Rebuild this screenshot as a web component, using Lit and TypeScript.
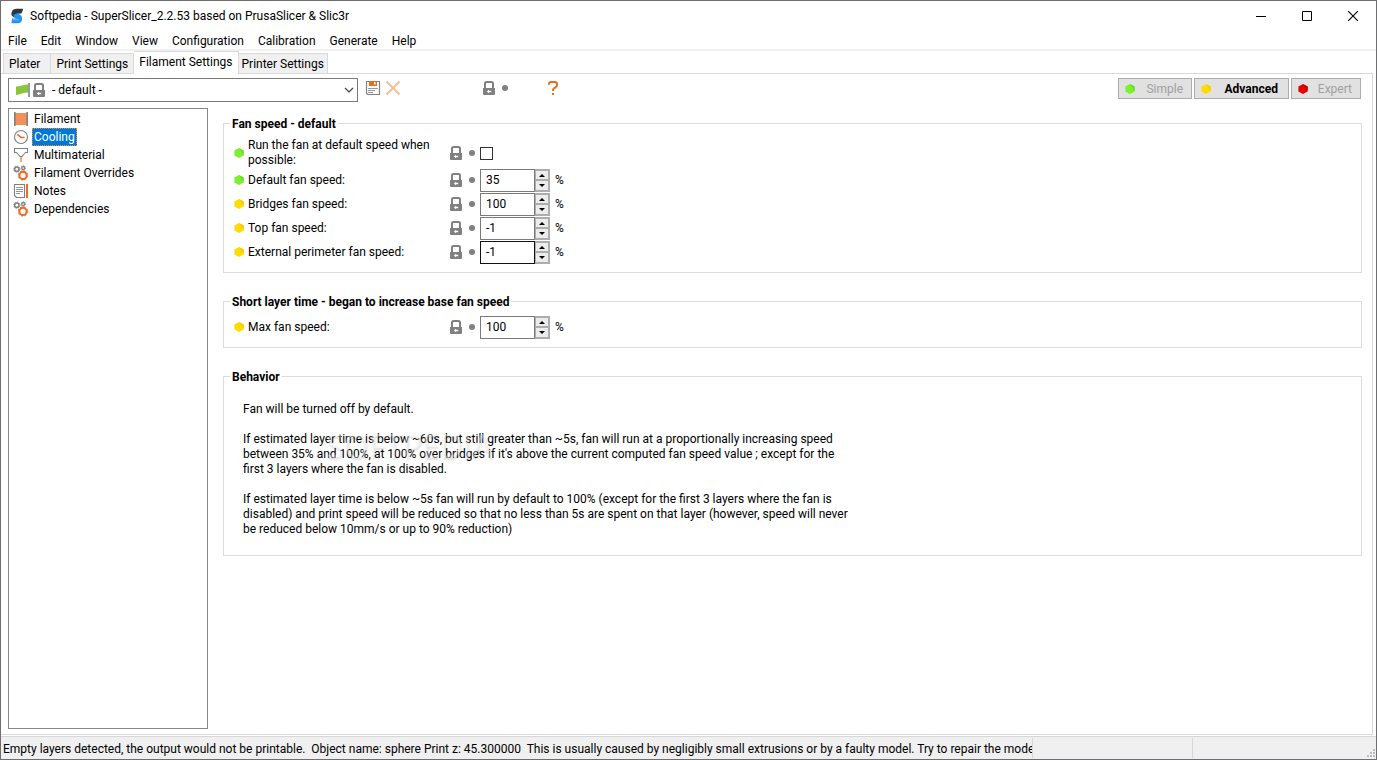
import { LitElement, html, css, svg, nothing } from "lit";
import { customElement, property } from "lit/decorators.js";

const GREY = "#808080";
const ORANGE = "#ed6b21";

const art: Record<string, { box: string; body: unknown }> = {
  lock: {
    box: "0 0 16 16",
    body: svg`<path d="M4 9V3.6Q4 2 5.6 2H10.4Q12 2 12 3.6V9" fill="none" stroke="${GREY}" stroke-width="2"/>
      <path d="M2 8H14V14Q14 15 13 15H3Q2 15 2 14Z" fill="${GREY}"/>
      <path d="M5.8 11.5 8 9.7V10.8H10.2V12.2H8V13.3Z" fill="#fff"/>`,
  },
  dot: { box: "0 0 16 16", body: svg`<circle cx="8" cy="8" r="3" fill="${GREY}"/>` },
  flag: {
    box: "0 0 16 16",
    body: svg`<path d="M1 4.6Q4 4.6 7 3.6T13 2.6V10.4Q10 10.4 7 11.6T1 13Z" fill="#8bc53f"/><path d="M14 1V15" stroke="${GREY}" stroke-width="1.6"/>`,
  },
  save: {
    box: "0 0 16 16",
    body: svg`<path d="M1.5 1.5H14.5V14.5H2.8L1.5 13.2Z" fill="#fff" stroke="${GREY}" stroke-width="1.2"/>
      <path d="M4 1H12V6H4Z" fill="${ORANGE}"/><path d="M9 2H10.6V4.4H9Z" fill="#fff"/>
      <path d="M3 8.5H13M3 10.5H10M3 12.5H8" stroke="#999"/>`,
  },
  cross: { box: "0 0 16 16", body: svg`<path d="M1.5 1.5 14.5 14.5M14.5 1.5 1.5 14.5" stroke="#f6bd9c" stroke-width="2"/>` },
  help: {
    box: "0 0 16 16",
    body: svg`<path d="M4 4.8V4Q4 2 6 2H10Q12 2 12 4V5Q12 6.6 10 7.6T8 10V11" fill="none" stroke="${ORANGE}" stroke-width="2"/><path d="M7 13H9V15H7Z" fill="${ORANGE}"/>`,
  },
  filament: {
    box: "0 0 16 16",
    body: svg`<path d="M2 2H14V14H2Z" fill="#f4905c"/><path d="M1.8 1V15M14.2 1V15" stroke="${GREY}" stroke-width="1.6"/>`,
  },
  clock: {
    box: "0 0 16 16",
    body: svg`<circle cx="8" cy="8" r="6.5" fill="#fff" stroke="${GREY}" stroke-width="1.1"/><path d="M4.4 5.4 8 8.4H11.6" fill="none" stroke="${ORANGE}" stroke-width="1.5"/>`,
  },
  nozzle: {
    box: "0 0 16 16",
    body: svg`<path d="M1.5 1.5H14.5V5.5H12.5L9 9.5H7L3.5 5.5H1.5Z" fill="#fff" stroke="${GREY}" stroke-width="1.1"/><path d="M8 10V15" stroke="#f4a67c" stroke-width="2"/>`,
  },
  gears: {
    box: "0 0 16 16",
    body: svg`<circle cx="3.8" cy="4.2" r="2.2" fill="none" stroke="${GREY}" stroke-width="1.5"/>
      <circle cx="3.8" cy="4.2" r="3.1" fill="none" stroke="${GREY}" stroke-width=".9" stroke-dasharray="1.2 1.2"/>
      <circle cx="10.2" cy="3" r="1.5" fill="none" stroke="${GREY}" stroke-width="1.3"/>
      <circle cx="10.2" cy="3" r="2.3" fill="none" stroke="${GREY}" stroke-width=".7" stroke-dasharray="1 .9"/>
      <circle cx="10" cy="10.4" r="3.6" fill="#fff" stroke="${ORANGE}" stroke-width="2"/>
      <circle cx="10" cy="10.4" r="4.7" fill="none" stroke="${ORANGE}" stroke-width="1" stroke-dasharray="1.9 1.8"/>`,
  },
  note: {
    box: "0 0 16 16",
    body: svg`<path d="M1.5 1.5H11.5V14.5H3.5L1.5 12.5Z" fill="#fff" stroke="${GREY}" stroke-width="1.1"/><path d="M3 4.5H10M3 6.5H10M3 8.5H10M3 10.5H7" stroke="#999"/><path d="M14 1V15" stroke="${ORANGE}" stroke-width="2"/>`,
  },
  logo: {
    box: "0 0 16 16",
    body: svg`<path d="M14.2 .8Q13.6 3.4 12.4 5.4L8.6 5.8Q8.4 6.6 9.6 7.4L6 9.8Q2.2 8.4 2.4 5.4 3 1.2 7 .8Z" fill="#2c3640"/>
      <path d="M4.6 6.8 8.4 5.2 11.8 7.2Q14 9.2 13 12 12 15.2 8.8 15.2H2.4L3.2 10.6H6.6Q6.8 9.6 4.6 8.6Z" fill="#2492f0"/>
      <path d="M4 11.8H9.6" stroke="#7cc2fa"/>`,
  },
  min: { box: "0 0 10 10", body: svg`<path d="M0 5.5H10" stroke="#000"/>` },
  max: { box: "0 0 10 10", body: svg`<path d="M.5 .5H9.5V9.5H.5Z" fill="none" stroke="#000"/>` },
  close: { box: "0 0 10 10", body: svg`<path d="M0 0 10 10M10 0 0 10" stroke="#000" stroke-width="1.1"/>` },
  chevron: { box: "0 0 10 10", body: svg`<path d="M1 3 5 7 9 3" fill="none" stroke="#444" stroke-width="1.2"/>` },
  up: { box: "0 0 14 9", body: svg`<path d="M3.5 6.5 7 3 10.5 6.5Z" fill="#000"/>` },
  down: { box: "0 0 14 9", body: svg`<path d="M3.5 3 7 6.5 10.5 3Z" fill="#000"/>` },
  grip: {
    box: "0 0 10 10",
    body: svg`<path d="M7 1h2v2H7zM4 4h2v2H4zM7 4h2v2H7zM1 7h2v2H1zM4 7h2v2H4zM7 7h2v2H7z" fill="#bdbdbd"/>`,
  },
};

const levels: Record<string, [string, string]> = {
  simple: ["#7cf02c", "#6cd92b"],
  advanced: ["#ffdc00", "#f8cb00"],
  expert: ["#e80000", "#c80000"],
};
const hexagon = (level: string) => svg`
  <path d="M5 0 9.6 2.6V7.4L5 10 .4 7.4V2.6Z" fill="${levels[level][0]}"/>
  <path d="M5 0 9.6 2.6V7.4Z" fill="${levels[level][1]}"/>`;

@customElement("ui-icon")
export class UiIcon extends LitElement {
  @property() name = "";
  static styles = css`
    :host { display: inline-flex; flex: none; width: 16px; height: 16px; }
    svg { width: 100%; height: 100%; display: block; }
  `;
  render() {
    if (this.name in levels) return html`<svg viewBox="0 0 10 10" aria-hidden="true">${hexagon(this.name)}</svg>`;
    const item = art[this.name];
    return item ? html`<svg viewBox=${item.box} aria-hidden="true">${item.body}</svg>` : nothing;
  }
}

interface Field {
  id: string;
  label: string;
  level: string;
  value?: number;
  focused?: boolean;
}

const fanFields: Field[] = [
  { id: "always-on", label: "Run the fan at default speed when possible:", level: "simple" },
  { id: "default-speed", label: "Default fan speed:", level: "simple", value: 35 },
  { id: "bridge-speed", label: "Bridges fan speed:", level: "advanced", value: 100 },
  { id: "top-speed", label: "Top fan speed:", level: "advanced", value: -1 },
  { id: "external-speed", label: "External perimeter fan speed:", level: "advanced", value: -1, focused: true },
];
const layerFields: Field[] = [{ id: "max-speed", label: "Max fan speed:", level: "advanced", value: 100 }];

const menus = ["File", "Edit", "Window", "View", "Configuration", "Calibration", "Generate", "Help"];
const tabs = ["Plater", "Print Settings", "Filament Settings", "Printer Settings"];
const pages = [
  ["filament", "Filament"],
  ["clock", "Cooling"],
  ["nozzle", "Multimaterial"],
  ["gears", "Filament Overrides"],
  ["note", "Notes"],
  ["gears", "Dependencies"],
];
const modes = [
  ["simple", "Simple"],
  ["advanced", "Advanced"],
  ["expert", "Expert"],
];
const captions = [
  ["min", "Minimize"],
  ["max", "Maximize"],
  ["close", "Close"],
];

@customElement("app-root")
export class AppRoot extends LitElement {
  static styles = css`
    :host {
      display: flex; flex-direction: column; box-sizing: border-box; height: 100vh; min-height: 600px;
      border: 1px solid #6e6e70; background: #fff; color: #000;
      font: 12px/15px Roboto, "Open Sans", sans-serif;
    }
    * { box-sizing: border-box; }
    button, input, select { font: inherit; color: inherit; margin: 0; padding: 0; border-radius: 0; }
    button { border: 0; background: none; white-space: nowrap; }
    .titlebar { display: flex; align-items: center; height: 29px; padding-left: 8px; flex: none; }
    .title { font: inherit; margin: 0; padding: 2px 0 0 5px; flex: 1; }
    .caption { width: 46px; height: 29px; display: grid; place-items: center; }
    .caption ui-icon { width: 10px; height: 10px; }
    .menubar { display: flex; flex: none; height: 21px; border-bottom: 2px solid #f0f0f0; }
    .menubar button { padding: 4px 7px 0; }
    .tabs { display: flex; align-items: flex-end; flex: none; height: 22px; padding-left: 2px; }
    .tab { height: 20px; padding: 2px 5px 0; border: 1px solid #d9d9d9; border-bottom: 0; background: #f0f0f0; }
    .tab + .tab { border-left: 0; }
    .tab:first-child { padding-right: 10px; }
    .tab:last-child { padding: 2px 3px 0; }
    .tab.active { height: 23px; margin-bottom: -1px; padding: 0 5px 1px; background: #fff; z-index: 1; }
    .panel {
      flex: 1; min-height: 0; display: flex; flex-direction: column; gap: 6px;
      margin: 0 3px 1px 0; padding: 4px 10px 5px 7px; border: 1px solid #d9d9d9; border-left-width: 0;
    }
    .toolbar { display: flex; flex: none; height: 24px; align-items: flex-start; padding-right: 1px; }
    .preset { display: grid; width: 350px; height: 24px; align-items: center; border: 1px solid #7a7a7a; }
    .preset > * { grid-area: 1 / 1; }
    .preset select { appearance: none; width: 100%; height: 22px; border: 0; padding: 0 24px 0 43px; background: none; outline: 0; }
    .marks { display: flex; padding-left: 6px; pointer-events: none; }
    .arrow { width: 10px; height: 10px; justify-self: end; margin-right: 3px; pointer-events: none; }
    .tools { display: flex; padding: 2px 0 0 7px; }
    .tools button, .marker { display: grid; width: 16px; height: 16px; }
    .delete { margin-left: 4px; }
    .reset { margin-left: 80px; }
    .help { margin-left: 32px; }
    .modes { display: flex; gap: 2px; margin-left: auto; }
    .mode {
      display: flex; align-items: center; justify-content: space-between; height: 21px; width: 74px;
      padding: 0 8px 0 6px; border: 1px solid #adadad; background: #e1e1e1; color: #a0a0a0;
    }
    .mode span { padding-top: 2px; }
    .mode:nth-child(2) { width: 95px; padding-right: 10px; }
    .mode:nth-child(3) { width: 70px; }
    .mode.active { color: #000; font-weight: 700; }
    .mode ui-icon, .level { width: 10px; height: 10px; }
    .body { flex: 1; min-height: 0; display: grid; grid-template-columns: 200px 1fr; gap: 15px; }
    .pages { border: 1px solid #828790; margin: 0; padding: 1px 4px; list-style: none; }
    .pages li { height: 18px; }
    .page { display: flex; align-items: center; height: 18px; gap: 3px; color: #000; text-decoration: none; width: max-content; }
    .page span { padding: 0 1px; height: 18px; line-height: 16px; border: 1px solid transparent; }
    .page.active span { background: #0078d7; color: #fff; border: 1px dotted #ff8728; }
    .content { display: flex; flex-direction: column; gap: 20px; min-width: 0; padding-top: 7px; overflow: auto; }
    .group { margin: 0; padding: 0 10px; border: 1px solid #dcdcdc; min-width: 0; }
    .group legend { margin-left: -4px; padding: 2px 2px 0; font-weight: 700; line-height: 14px; }
    .rows { display: flex; flex-direction: column; padding-bottom: 8px; }
    .rows.single { padding: 6px 0 8px; }
    .row { display: grid; grid-template-columns: 214px 16px 16px auto 1fr; align-items: center; min-height: 24px; }
    .row.tick { padding: 7px 0 0; min-height: 37px; }
    .row label { display: flex; align-items: center; gap: 4px; }
    .row label span { flex: 1; padding-right: 10px; }
    .row input[type="checkbox"] { appearance: none; width: 13px; height: 13px; border: 1px solid #333; background: #fff; }
    .spin { display: grid; grid-template: 1fr 1fr / 55px 15px; width: 70px; height: 23px; background: #f0f0f0; outline-offset: -1px; outline: 1px solid #adadad; }
    .spin input { grid-row: 1 / 3; width: 55px; height: 23px; border: 1px solid #7a7a7a; padding-left: 5px; background: #fff; z-index: 1; outline: 0; }
    .spin.focused input { border-color: #111; }
    .spin button { border: 1px solid #adadad; display: grid; background: #ececec; margin: 1px 1px 0 0; }
    .spin button + button { margin: 0 1px 1px 0; }
    .spin ui-icon { width: 100%; height: 100%; }
    .control { display: flex; align-items: center; gap: 5px; }
    .behavior { position: relative; padding: 18px 9px; width: 630px; }
    .behavior p { margin: 0; }
    .behavior p + p { margin-top: 15px; }
    .watermark {
      position: absolute; left: 92px; top: 42px; font: 32px/40px "Open Sans", sans-serif;
      color: rgba(255, 255, 255, 0.4); text-shadow: 1px 2px 2px rgba(0, 0, 0, 0.12); pointer-events: none;
    }
    .status { flex: none; display: grid; grid-template-columns: 1032px 160px 1fr; height: 23px; border-top: 1px solid #d7d7d7; background: #f0f0f0; }
    .status div { border-right: 1px solid #d7d7d7; margin: 1px 0; padding: 4px 0 0 2px; white-space: pre; overflow: hidden; }
    .status div:last-child { border: 0; display: flex; justify-content: flex-end; align-items: flex-end; padding: 0; }
    .status ui-icon { width: 10px; height: 10px; }
  `;

  private step(id: string, delta: number) {
    const input = this.renderRoot.querySelector<HTMLInputElement>("#" + id);
    if (input) input.value = String(Number(input.value) + delta);
  }

  private field(f: Field) {
    const tick = f.value === undefined;
    return html`<div class="row ${tick ? "tick" : ""}">
      <label for=${f.id}><ui-icon class="level" name=${f.level}></ui-icon><span>${f.label}</span></label>
      <ui-icon name="lock"></ui-icon><ui-icon name="dot"></ui-icon>
      ${tick
        ? html`<input type="checkbox" id=${f.id} />`
        : html`<div class="control">
            <div class="spin ${f.focused ? "focused" : ""}">
              <input type="text" inputmode="numeric" id=${f.id} .value=${String(f.value)} />
              <button aria-label="Increase" @click=${() => this.step(f.id, 1)}><ui-icon name="up"></ui-icon></button>
              <button aria-label="Decrease" @click=${() => this.step(f.id, -1)}><ui-icon name="down"></ui-icon></button>
            </div>
            <span>%</span>
          </div>`}
    </div>`;
  }

  render() {
    return html`
      <header class="titlebar">
        <ui-icon name="logo"></ui-icon>
        <h1 class="title">Softpedia - SuperSlicer_2.2.53 based on PrusaSlicer &amp; Slic3r</h1>
        ${captions.map(([n, t]) => html`<button class="caption" aria-label=${t}><ui-icon name=${n}></ui-icon></button>`)}
      </header>
      <nav class="menubar">${menus.map((m) => html`<button>${m}</button>`)}</nav>
      <div class="tabs" role="tablist">
        ${tabs.map((t, i) => html`<button class="tab ${i === 2 ? "active" : ""}" role="tab" aria-selected=${i === 2}>${t}</button>`)}
      </div>
      <main class="panel">
        <div class="toolbar">
          <div class="preset">
            <select aria-label="Filament preset"><option>- default -</option></select>
            <span class="marks"><ui-icon name="flag"></ui-icon><ui-icon name="lock"></ui-icon></span>
            <ui-icon class="arrow" name="chevron"></ui-icon>
          </div>
          <div class="tools">
            <button aria-label="Save preset"><ui-icon name="save"></ui-icon></button>
            <button class="delete" aria-label="Delete preset"><ui-icon name="cross"></ui-icon></button>
            <button class="reset" aria-label="Reset to system values"><ui-icon name="lock"></ui-icon></button>
            <span class="marker"><ui-icon name="dot"></ui-icon></span>
            <button class="help" aria-label="Help"><ui-icon name="help"></ui-icon></button>
          </div>
          <div class="modes">
            ${modes.map(([n, t]) => html`<button class="mode ${n === "advanced" ? "active" : ""}"><ui-icon name=${n}></ui-icon><span>${t}</span></button>`)}
          </div>
        </div>
        <div class="body">
          <ul class="pages">
            ${pages.map(([icon, t], i) => html`<li><a class="page ${i === 1 ? "active" : ""}" href="#${t}"><ui-icon name=${icon}></ui-icon><span>${t}</span></a></li>`)}
          </ul>
          <section class="content">
            <fieldset class="group">
              <legend>Fan speed - default</legend>
              <div class="rows">${fanFields.map((f) => this.field(f))}</div>
            </fieldset>
            <fieldset class="group">
              <legend>Short layer time - began to increase base fan speed</legend>
              <div class="rows single">${layerFields.map((f) => this.field(f))}</div>
            </fieldset>
            <fieldset class="group">
              <legend>Behavior</legend>
              <div class="behavior">
                <p>Fan will be turned off by default.</p>
                <p>If estimated layer time is below ~60s, but still greater than ~5s, fan will run at a proportionally increasing speed between 35% and 100%, at 100% over bridges if it's above the current computed fan speed value ; except for the first 3 layers where the fan is disabled.</p>
                <p>If estimated layer time is below ~5s fan will run by default to 100% (except for the first 3 layers where the fan is disabled) and print speed will be reduced so that no less than 5s are spent on that layer (however, speed will never be reduced below 10mm/s or up to 90% reduction)</p>
                <span class="watermark">SOFTPEDIA</span>
              </div>
            </fieldset>
          </section>
        </div>
      </main>
      <footer class="status">
        <div>Empty layers detected, the output would not be printable.  Object name: sphere Print z: 45.300000  This is usually caused by negligibly small extrusions or by a faulty model. Try to repair the model or</div>
        <div></div>
        <div><ui-icon name="grip"></ui-icon></div>
      </footer>
    `;
  }
}
